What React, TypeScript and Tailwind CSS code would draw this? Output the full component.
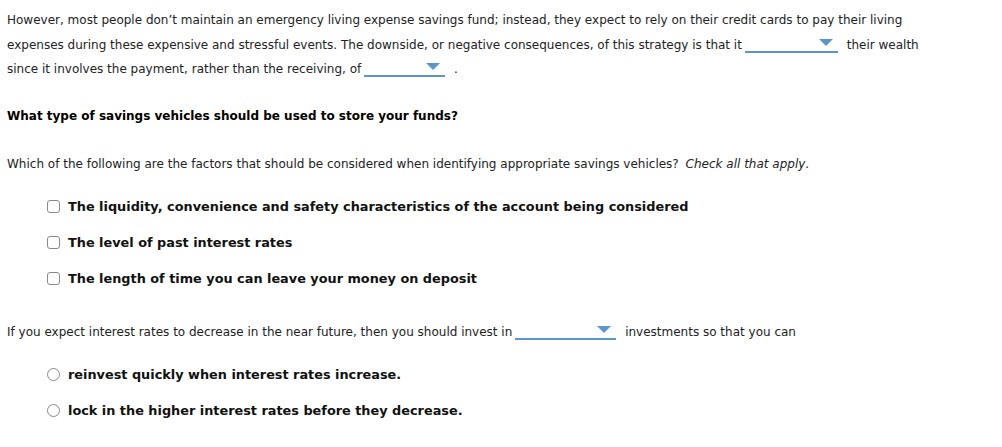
import React from 'react';

const font = { fontFamily: '"DejaVu Sans", Verdana, sans-serif' };

function Blank({ width }: { width: string }) {
  return (
    <span className={`relative inline-block align-[-4px] h-[18px] border-b-2 border-[#5a95cc] ml-[3px] mr-[5px] ${width}`}>
      <svg className="absolute right-[5px] top-[4px]" width="14" height="7" viewBox="0 0 14 7">
        <path d="M0 0 L14 0 L7 7 Z" fill="#5a95cc" />
      </svg>
    </span>
  );
}

function Check({ label }: { label: string }) {
  return (
    <div className="flex items-center gap-[8px] h-[36px]">
      <span className="w-[13px] h-[13px] rounded-[3px] border border-[#8a8a8a] bg-white shrink-0" />
      <span className="font-bold text-[12.85px] text-[#111]">{label}</span>
    </div>
  );
}

function Radio({ label }: { label: string }) {
  return (
    <div className="flex items-center gap-[8px] h-[36px]">
      <span className="w-[13px] h-[13px] rounded-full border border-[#8a8a8a] bg-white shrink-0" />
      <span className="font-bold text-[12.85px] text-[#111]">{label}</span>
    </div>
  );
}

export default function App() {
  return (
    <div className="bg-white w-[1002px] h-[447px] pl-[7px] pt-[8px] text-[12px] text-[#222]" style={font}>
      <p className="leading-[24.5px] w-[935px]">
        However, most people don’t maintain an emergency living expense savings fund; instead, they expect to rely on their credit cards to pay their living expenses during these expensive and stressful events. The downside, or negative consequences, of this strategy is that it
        <Blank width="w-[93px]" />
        {' '}their wealth since it involves the payment, rather than the receiving, of
        <Blank width="w-[81px]" /> .
      </p>

      <h3 className="font-bold text-[12px] text-black mt-[25px]">What type of savings vehicles should be used to store your funds?</h3>

      <p className="mt-[30px]">
        Which of the following are the factors that should be considered when identifying appropriate savings vehicles?{' '}
        <i className="ml-[3px]">Check all that apply</i>.
      </p>

      <div className="pl-[40px] mt-[16px]">
        <Check label="The liquidity, convenience and safety characteristics of the account being considered" />
        <Check label="The level of past interest rates" />
        <Check label="The length of time you can leave your money on deposit" />
      </div>

      <p className="mt-[25px]">
        If you expect interest rates to decrease in the near future, then you should invest in
        <Blank width="w-[101px]" />
        {' '}investments so that you can
      </p>

      <div className="pl-[40px] mt-[16px]">
        <Radio label="reinvest quickly when interest rates increase." />
        <Radio label="lock in the higher interest rates before they decrease." />
      </div>
    </div>
  );
}
